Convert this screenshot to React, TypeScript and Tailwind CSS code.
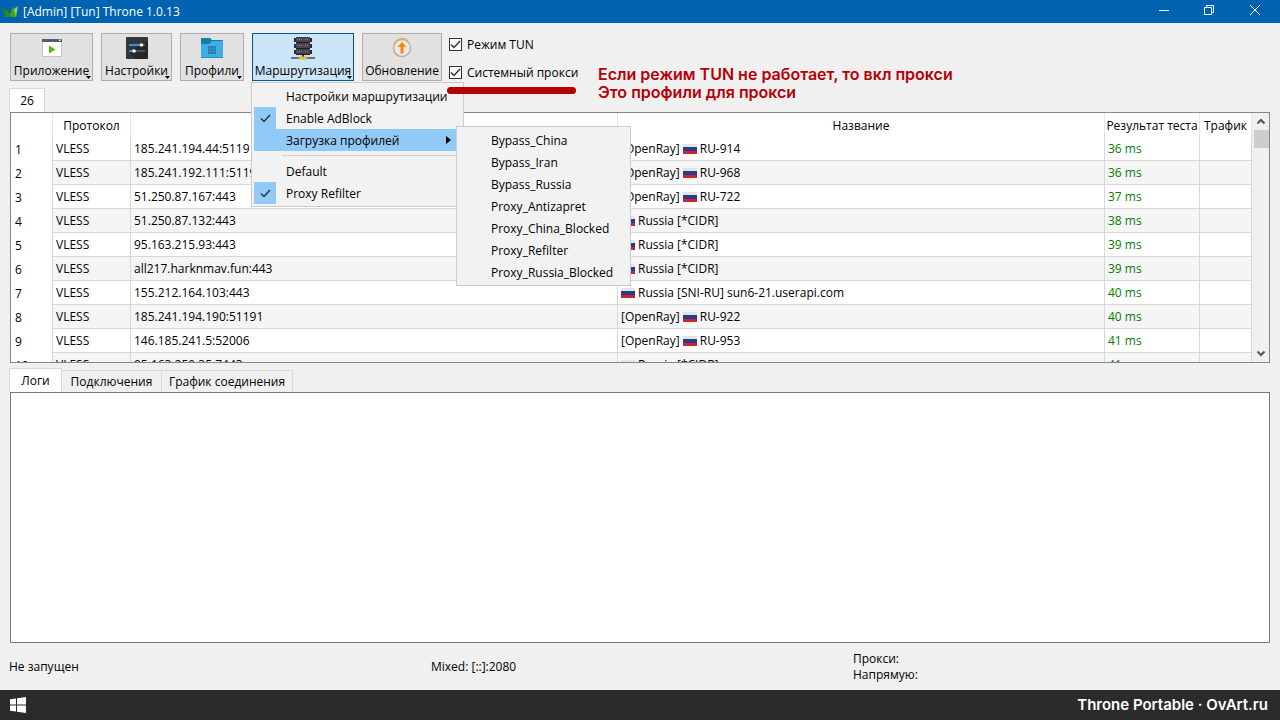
import React, { useState } from 'react';
import clsx from 'clsx';

interface Profile {
  address: string;
  tag?: string;
  name: string;
  ping: number;
}

const profiles: Profile[] = [
  { address: '185.241.194.44:51191', tag: '[OpenRay]', name: 'RU-914', ping: 36 },
  { address: '185.241.192.111:51191', tag: '[OpenRay]', name: 'RU-968', ping: 36 },
  { address: '51.250.87.167:443', tag: '[OpenRay]', name: 'RU-722', ping: 37 },
  { address: '51.250.87.132:443', name: 'Russia [*CIDR]', ping: 38 },
  { address: '95.163.215.93:443', name: 'Russia [*CIDR]', ping: 39 },
  { address: 'all217.harknmav.fun:443', name: 'Russia [*CIDR]', ping: 39 },
  { address: '155.212.164.103:443', name: 'Russia [SNI-RU] sun6-21.userapi.com', ping: 40 },
  { address: '185.241.194.190:51191', tag: '[OpenRay]', name: 'RU-922', ping: 40 },
  { address: '146.185.241.5:52006', tag: '[OpenRay]', name: 'RU-953', ping: 41 },
  { address: '95.163.250.35:7443', name: 'Russia [*CIDR]', ping: 41 },
];

const routingProfiles = [
  'Bypass_China',
  'Bypass_Iran',
  'Bypass_Russia',
  'Proxy_Antizapret',
  'Proxy_China_Blocked',
  'Proxy_Refilter',
  'Proxy_Russia_Blocked',
];

const AppLogo = () => (
  <svg width="16" height="12" viewBox="0 0 16 12">
    <path d="M0 0 4 4 7 9 5 11H2Z" fill="#1c7a35" />
    <path d="M16 0 12 3 9 8 11 11H14Z" fill="#8bd05c" />
    <path d="M11 0 14 11H7Z" fill="#3fa51c" />
    <path d="M5 3 9 11H3Z" fill="#2a8a2c" />
  </svg>
);

const ProgramIcon = () => (
  <svg width="22" height="22" viewBox="0 0 22 22">
    <rect x="1" y="2" width="20" height="18" fill="#c3c7ca" />
    <rect x="2" y="5" width="18" height="14" fill="#fff" />
    <rect x="1" y="2" width="20" height="3" fill="#4d6070" />
    <rect x="18" y="2.5" width="1.5" height="1.5" fill="#fff" />
    <path d="M8 8.500v8l6.500-4z" fill="#55b90c" />
  </svg>
);

const SettingsIcon = () => (
  <svg width="22" height="22" viewBox="0 0 22 22">
    <rect width="22" height="22" rx="1" fill="#31363b" />
    <path d="M22 4v17l-1 1H10l-7-7z" fill="#24282c" />
    <path d="M3 8h12M3 14h4" stroke="#3d8fd6" strokeWidth="2" />
    <path d="M16 8h3M8 14h11" stroke="#50565c" strokeWidth="2" />
    <circle cx="15.500" cy="8" r="1.800" fill="#fff" />
    <circle cx="8" cy="14" r="1.800" fill="#fff" />
  </svg>
);

const FolderIcon = () => (
  <svg width="22" height="22" viewBox="0 0 22 22">
    <path d="M0 1h9l2 2h11v8H0z" fill="#147ea8" />
    <path d="M0 7h8l3-3h11v17H0z" fill="#3daee9" />
    <path d="M0 20h22v1H0z" fill="#2f8fc0" />
    <rect x="7" y="9" width="8" height="8" fill="#247fad" />
    <path d="M7 11.500h8M7 14.500h8M9.500 9v8M12.500 9v8" stroke="#3b9acb" strokeWidth=".6" />
  </svg>
);

const ServerIcon = () => (
  <svg width="24" height="24" viewBox="0 0 24 24">
    {[1, 7, 13].map((y) => (
      <g key={y}>
        <path d={`M3 ${y + 1}h18v4H3z`} fill="#2b2930" />
        <path d={`M5 ${y}h14v5.500H5z`} fill="#47444e" />
        <path d={`M6 ${y + 2.5}h6M14 ${y + 2.5}h4`} stroke="#8d8996" strokeDasharray="1 1" />
        <path d={`M5 ${y + 5.5}h14`} stroke="#1d1b21" />
      </g>
    ))}
    <path d="M12 19v3" stroke="#35333b" strokeWidth="2" />
    <path d="M0 22h24" stroke="#4a4d55" strokeWidth="1.500" />
    <path d="M8 20.500h8v3H8z" fill="#e8b92a" />
  </svg>
);

const UpdateIcon = () => (
  <svg width="22" height="22" viewBox="0 0 22 22">
    <circle cx="11" cy="11" r="8.500" fill="#e9e9e9" stroke="#b4b4b4" strokeWidth="1.500" />
    <path d="M3 8a8.500 8.500 0 0 1 14-4M3.500 15a8.500 8.500 0 0 0 4 4" fill="none" stroke="#f2a33a" strokeWidth="1.200" />
    <path d="M11 5l4.500 5h-3v6.500h-3V10h-3z" fill="#f68b0a" />
  </svg>
);

const RussiaFlag = () => (
  <svg className="mx-[3px] inline-block align-[-1px]" width="14" height="10" viewBox="0 0 14 10">
    <path d="M0 0h14v10H0z" fill="#e4e4e4" />
    <path d="M0 3h14v4H0z" fill="#22408f" />
    <path d="M0 7h14v3H0z" fill="#d3202b" />
  </svg>
);

const CheckMark = () => (
  <svg width="11" height="9" viewBox="0 0 11 9">
    <path d="M1 4.500l3 3L10 1" fill="none" stroke="#333" strokeWidth="1.500" />
  </svg>
);

interface ToolButtonProps {
  label: string;
  width: string;
  icon: React.ReactNode;
  hasMenu?: boolean;
  active?: boolean;
}

const ToolButton: React.FC<ToolButtonProps> = ({ label, width, icon, hasMenu = true, active = false }) => (
  <button
    type="button"
    className={clsx(
      'relative flex h-12 flex-col items-center border pt-[2px]',
      width,
      active ? 'border-[#00559b] bg-[#cce4f7]' : 'border-[#adadad] bg-[#e1e1e1]',
    )}
  >
    <span className="flex h-6 shrink-0 items-center">{icon}</span>
    <span className="shrink-0 pt-px leading-5 whitespace-nowrap">{label}</span>
    {hasMenu && (
      <svg className="absolute right-px bottom-px" width="5" height="3" viewBox="0 0 5 3">
        <path d="M0 0h5L2.500 3z" fill="#000" />
      </svg>
    )}
  </button>
);

interface MenuItemProps {
  label: string;
  checked?: boolean;
  highlighted?: boolean;
}

const MenuItem: React.FC<MenuItemProps> = ({ label, checked = false, highlighted = false }) => (
  <button
    type="button"
    role="menuitem"
    className={clsx('flex h-[22px] w-full items-center text-left', highlighted && 'bg-[#91c9f7]')}
  >
    <span className={clsx('mr-[10px] flex h-[22px] w-[22px] items-center justify-center', checked && 'bg-[#91c9f7]')}>
      {checked && <CheckMark />}
    </span>
    <span className="pt-[2px] whitespace-nowrap">{label}</span>
    {highlighted && (
      <svg className="mr-[5px] ml-auto" width="5" height="8" viewBox="0 0 5 8">
        <path d="M0 0l5 4-5 4z" fill="#000" />
      </svg>
    )}
  </button>
);

const RoutingMenu = () => (
  <div className="absolute top-[49px] -left-px z-10 w-[213px] border border-[#ccc] bg-[#f2f2f2] p-[2px]" role="menu">
    <MenuItem label="Настройки маршрутизации" />
    <MenuItem label="Enable AdBlock" checked />
    <div className="relative bg-[#91c9f7] pr-[5px]">
      <MenuItem label="Загрузка профилей" highlighted />
      <div
        className="absolute -top-[3px] left-[202px] w-[175px] border border-[#ccc] bg-[#f2f2f2] p-[2px]"
        role="menu"
      >
        {routingProfiles.map((profile) => (
          <MenuItem key={profile} label={profile} />
        ))}
      </div>
    </div>
    <div className="my-1 ml-7 h-px bg-[#d0d0d0]"></div>
    <MenuItem label="Default" />
    <MenuItem label="Proxy Refilter" checked />
  </div>
);

const CheckOption: React.FC<{ label: string }> = ({ label }) => (
  <label className="flex h-4 items-center gap-[5px] whitespace-nowrap">
    <span className="relative flex h-[13px] w-[13px]">
      <input
        type="checkbox"
        defaultChecked
        className="peer h-[13px] w-[13px] appearance-none border border-[#333] bg-white"
      />
      <span className="pointer-events-none absolute inset-0 hidden items-center justify-center peer-checked:flex">
        <CheckMark />
      </span>
    </span>
    <span className="pt-[2px]">{label}</span>
  </label>
);

const ProfileTable = () => (
  <div className="flex h-[251px] shrink-0 overflow-hidden border border-[#828790] bg-white">
    <div className="min-w-0 flex-1">
      <table className="w-full table-fixed border-separate border-spacing-0">
        <colgroup>
          <col className="w-[42px]" />
          <col className="w-[78px]" />
          <col />
          <col />
          <col className="w-[95px]" />
          <col className="w-[52px]" />
        </colgroup>
        <thead>
          <tr className="h-6 text-center whitespace-nowrap [&>th]:border-r [&>th]:border-[#e5e5e5] [&>th]:p-0 [&>th]:pt-[2px] [&>th]:font-normal">
            <th></th>
            <th>Протокол</th>
            <th></th>
            <th>Название</th>
            <th>Результат теста</th>
            <th>Трафик</th>
          </tr>
        </thead>
        <tbody>
          {profiles.map((profile, index) => (
            <tr
              key={profile.address}
              className="h-6 whitespace-nowrap even:bg-[#f5f5f5] [&>td]:border-r [&>td]:border-b [&>td]:border-[#d8d8d8] [&>td]:p-0 [&>td]:pl-[3px]"
            >
              <th className="border-r border-[#d8d8d8] bg-white p-0 pt-[2px] pl-1 text-left font-normal">
                {index + 1}
              </th>
              <td>VLESS</td>
              <td>{profile.address}</td>
              <td>
                {profile.tag}
                <span className={profile.tag ? '' : '-ml-[3px]'}>
                  <RussiaFlag />
                </span>
                {profile.name}
              </td>
              <td className="text-[#008000]">{profile.ping} ms</td>
              <td></td>
            </tr>
          ))}
        </tbody>
      </table>
    </div>
    <div className="flex w-[17px] flex-col items-center justify-between bg-[#f0f0f0] pl-px">
      <svg width="16" height="17" viewBox="0 0 16 17">
        <path d="M4.500 10.500L8 7l3.500 3.500" fill="none" stroke="#555" strokeWidth="2" />
      </svg>
      <div className="mb-auto h-[18px] w-[15px] bg-[#cdcdcd]"></div>
      <svg width="16" height="17" viewBox="0 0 16 17">
        <path d="M4.500 6.500L8 10l3.500-3.500" fill="none" stroke="#555" strokeWidth="2" />
      </svg>
    </div>
  </div>
);

const logTabs = [
  { label: 'Логи', width: 'w-[53px]' },
  { label: 'Подключения', width: 'w-[101px]' },
  { label: 'График соединения', width: 'w-[132px]' },
];

const App: React.FC = () => {
  const [activeTab, setActiveTab] = useState(0);

  return (
    <div className="flex h-screen min-w-[960px] flex-col overflow-hidden bg-[#f0f0f0] font-['Open_Sans',sans-serif] text-[12px] leading-4 text-black">
      <header className="flex h-[23px] shrink-0 items-center bg-[#0063b1] px-[2px] text-white">
        <AppLogo />
        <h1 className="ml-[5px]">[Admin] [Tun] Throne 1.0.13</h1>
        <div className="ml-auto flex h-full pb-[3px]">
          <button type="button" aria-label="Свернуть" className="flex w-[45px] items-center justify-center">
            <svg width="10" height="10" viewBox="0 0 10 10">
              <path d="M0 5.500h10" stroke="#fff" />
            </svg>
          </button>
          <button type="button" aria-label="Восстановить" className="flex w-[46px] items-center justify-center">
            <svg width="10" height="10" viewBox="0 0 10 10" fill="none" stroke="#fff">
              <path d="M.5 2.500h7v7h-7zM2.500 2V.5h7v7H8" />
            </svg>
          </button>
          <button type="button" aria-label="Закрыть" className="flex w-[46px] items-center justify-center">
            <svg width="10" height="10" viewBox="0 0 10 10">
              <path d="M0 0l10 10M10 0L0 10" stroke="#fff" />
            </svg>
          </button>
        </div>
      </header>

      <main className="flex min-h-0 flex-1 flex-col px-[10px] pt-[10px]">
        <div className="flex h-[55px] gap-2">
          <ToolButton label="Приложение" width="w-[83px]" icon={<ProgramIcon />} />
          <ToolButton label="Настройки" width="w-[71px]" icon={<SettingsIcon />} />
          <ToolButton label="Профили" width="w-[64px]" icon={<FolderIcon />} />
          <div className="relative">
            <ToolButton label="Маршрутизация" width="w-[102px]" icon={<ServerIcon />} active />
            <RoutingMenu />
          </div>
          <ToolButton label="Обновление" width="w-[80px]" icon={<UpdateIcon />} hasMenu={false} />
          <div className="relative -ml-px flex w-[127px] flex-col gap-3 pt-[3px]">
            <CheckOption label="Режим TUN" />
            <CheckOption label="Системный прокси" />
            <div className="absolute top-[54px] -left-[2px] z-20 h-[7px] w-[129px] rounded-full bg-[#b50006]"></div>
          </div>
          <p className="ml-[14px] pt-8 font-['Inter',sans-serif] text-[16px] leading-[18px] font-semibold whitespace-nowrap text-[#b50006]">
            Если режим TUN не работает, то вкл прокси
            <br />
            Это профили для прокси
          </p>
        </div>

        <div className="-ml-px flex">
          <button type="button" className="h-6 w-9 border border-b-0 border-[#d9d9d9] bg-white">
            26
          </button>
        </div>
        <ProfileTable />

        <div className="mt-[5px] -ml-px flex items-end" role="tablist">
          {logTabs.map((tab, index) => (
            <button
              key={tab.label}
              type="button"
              role="tab"
              aria-selected={activeTab === index}
              onClick={() => setActiveTab(index)}
              className={clsx(
                'border border-b-0 border-[#d9d9d9] whitespace-nowrap',
                tab.width,
                activeTab === index ? 'h-6 bg-white' : '-ml-px h-[22px]',
              )}
            >
              {tab.label}
            </button>
          ))}
        </div>
        <textarea
          readOnly
          aria-label="Логи"
          className="min-h-0 w-full flex-1 resize-none border border-[#7a7a7a] bg-white p-1 outline-none"
        />

        <div className="-mx-px grid h-[47px] shrink-0 grid-cols-3 items-center gap-x-1">
          <span>Не запущен</span>
          <span>Mixed: [::]:2080</span>
          <span>
            Прокси:
            <br />
            Напрямую:
          </span>
        </div>
      </main>

      <footer className="flex h-[30px] shrink-0 items-center justify-between bg-[#2b2b2b] pr-3 pl-[10px] font-['Inter',sans-serif] text-[15px] font-semibold text-white">
        <button type="button" aria-label="Пуск">
          <svg width="16" height="16" viewBox="0 0 16 16" fill="#fff">
            <path d="M0 2.300L6 1.400V7.500H0zM7 1.200L16 0V7.500H7zM0 8.500H6V14.600L0 13.700zM7 8.500H16V16L7 14.800z" />
          </svg>
        </button>
        <span>Throne Portable · OvArt.ru</span>
      </footer>
    </div>
  );
};

export default App;
